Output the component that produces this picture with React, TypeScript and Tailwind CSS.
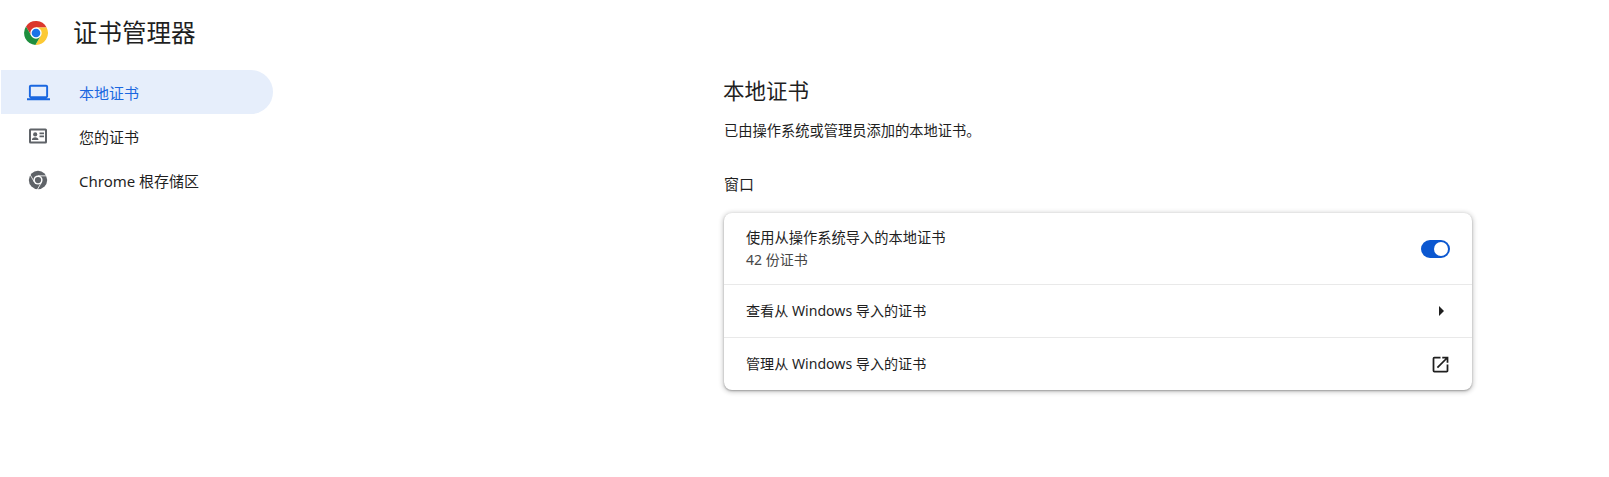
import { Fragment } from 'react';

const fontStack = 'font-["Noto_Sans","Noto_Sans_CJK_SC",sans-serif]';

function ChromeLogo() {
  return (
    <svg width="26" height="26" viewBox="0 0 48 48">
      <path d="M43.6 14A22 22 0 0 0 5.54 12.03L15.34 29 24 24V14Z" fill="#db372d" />
      <path d="M43.6 14A22 22 0 0 1 22.86 45.97L32.66 29 24 24V14Z" fill="#fcc934" />
      <path d="M22.86 45.97A22 22 0 0 1 5.54 12.03L15.34 29 24 24 32.66 29Z" fill="#1e8e3e" />
      <circle cx="24" cy="24" r="10.5" fill="#fff" />
      <circle cx="24" cy="24" r="8" fill="#1a73e8" />
    </svg>
  );
}

function LaptopIcon() {
  return (
    <svg width="23" height="23" viewBox="0 0 24 24" fill="#1a67e0">
      <path d="M20 18c1.1 0 2-.9 2-2V6c0-1.1-.9-2-2-2H4c-1.100 0-2 .9-2 2v10c0 1.100.9 2 2 2H0v2h24v-2h-4zM4 6h16v10H4V6z" />
    </svg>
  );
}

function IdCardIcon() {
  return (
    <svg width="20" height="18" viewBox="0 0 20 18" fill="#5f6368">
      <path d="M2.500 1.500h15A1.500 1.500 0 0 1 19 3v12a1.500 1.500 0 0 1-1.500 1.500h-15A1.500 1.500 0 0 1 1 15V3a1.500 1.500 0 0 1 1.500-1.500Zm.5 2v11h14v-11H3Z" />
      <circle cx="7.200" cy="7.400" r="2.100" />
      <path d="M3.900 13c0-1.800 1.500-2.800 3.300-2.800s3.300 1 3.300 2.800H3.900ZM11.500 5.500h4.500v1.700h-4.500zM11.500 8.500h4.500v1.700h-4.500z" />
    </svg>
  );
}

function ChromeMonoIcon() {
  return (
    <svg width="20" height="20" viewBox="0 0 48 48">
      <circle cx="24" cy="24" r="22" fill="#5f6368" />
      <path d="M24 14H46M32.660 29 21.500 48.500M15.340 29 4 9.500" stroke="#fff" strokeWidth="2" fill="none" />
      <circle cx="24" cy="24" r="11" fill="#fff" />
      <circle cx="24" cy="24" r="7.500" fill="#5f6368" />
    </svg>
  );
}

function OpenIcon() {
  return (
    <svg width="21" height="21" viewBox="0 0 24 24" fill="#1f1f1f">
      <path d="M19 19H5V5h7V3H5a2 2 0 0 0-2 2v14a2 2 0 0 0 2 2h14c1.100 0 2-.9 2-2v-7h-2v7zM14 3v2h3.590l-9.830 9.830 1.410 1.410L19 6.410V10h2V3h-7z" />
    </svg>
  );
}

const navItems = [
  { label: '本地证书', icon: <LaptopIcon />, active: true },
  { label: '您的证书', icon: <IdCardIcon />, active: false },
  { label: 'Chrome 根存储区', icon: <ChromeMonoIcon />, active: false },
];

export default function App() {
  return (
    <div className={`flex min-h-[477px] bg-white text-[#1f1f1f] ${fontStack}`}>
      <div className="w-[273px] shrink-0">
        <div className="flex h-[70px] items-center pl-[23px] pb-[5px]">
          <ChromeLogo />
          <h1 className="ml-[24px] text-[24.5px] leading-8 font-normal">证书管理器</h1>
        </div>
        <nav className="ml-px">
          {navItems.map((item) => (
            <a
              key={item.label}
              className={`flex h-11 items-center rounded-r-full text-[15px] font-normal ${
                item.active ? 'bg-[#e6eefb] text-[#1a67e0]' : ''
              }`}
            >
              <span className="flex w-[78px] justify-center pr-[4px]">{item.icon}</span>
              <span className="pt-[2px]">{item.label}</span>
            </a>
          ))}
        </nav>
      </div>

      <main className="pl-[451px] pt-[75px]">
        <h2 className="-ml-px text-[21.500px] leading-8 font-normal">本地证书</h2>
        <p className="mt-[14px] text-[14.250px] leading-5">已由操作系统或管理员添加的本地证书。</p>
        <h3 className="mt-[33px] text-[15px] leading-5 font-normal">窗口</h3>
        <section className="mt-[19px] w-[748px] rounded-lg bg-white shadow-[0_1px_2px_0_rgba(0,0,0,0.3),0_1px_4px_2px_rgba(0,0,0,0.15)]">
          <div className="flex h-[71px] items-center justify-between pl-[22px] pr-[22px]">
            <div>
              <div className="text-[14.250px] leading-[22px]">使用从操作系统导入的本地证书</div>
              <div className="text-sm leading-[22px] text-[#474747]">42 份证书</div>
            </div>
            <span className="flex h-[18px] w-[29px] items-center justify-end rounded-full bg-[#0b57d0] pr-[2px]">
              <span className="size-[14px] rounded-full bg-white" />
            </span>
          </div>
          {[
            { label: '查看从 Windows 导入的证书', icon: <span className="mr-[7px] h-0 w-0 border-y-[5px] border-l-[5px] border-y-transparent border-l-[#1f1f1f]" /> },
            { label: '管理从 Windows 导入的证书', icon: <OpenIcon /> },
          ].map((row) => (
            <Fragment key={row.label}>
              <div className="h-px bg-[#e9e9e9]" />
              <div className="flex h-[52px] items-center justify-between pl-[22px] pr-[21px] text-[14.100px]">
                {row.label}
                {row.icon}
              </div>
            </Fragment>
          ))}
        </section>
      </main>
    </div>
  );
}
